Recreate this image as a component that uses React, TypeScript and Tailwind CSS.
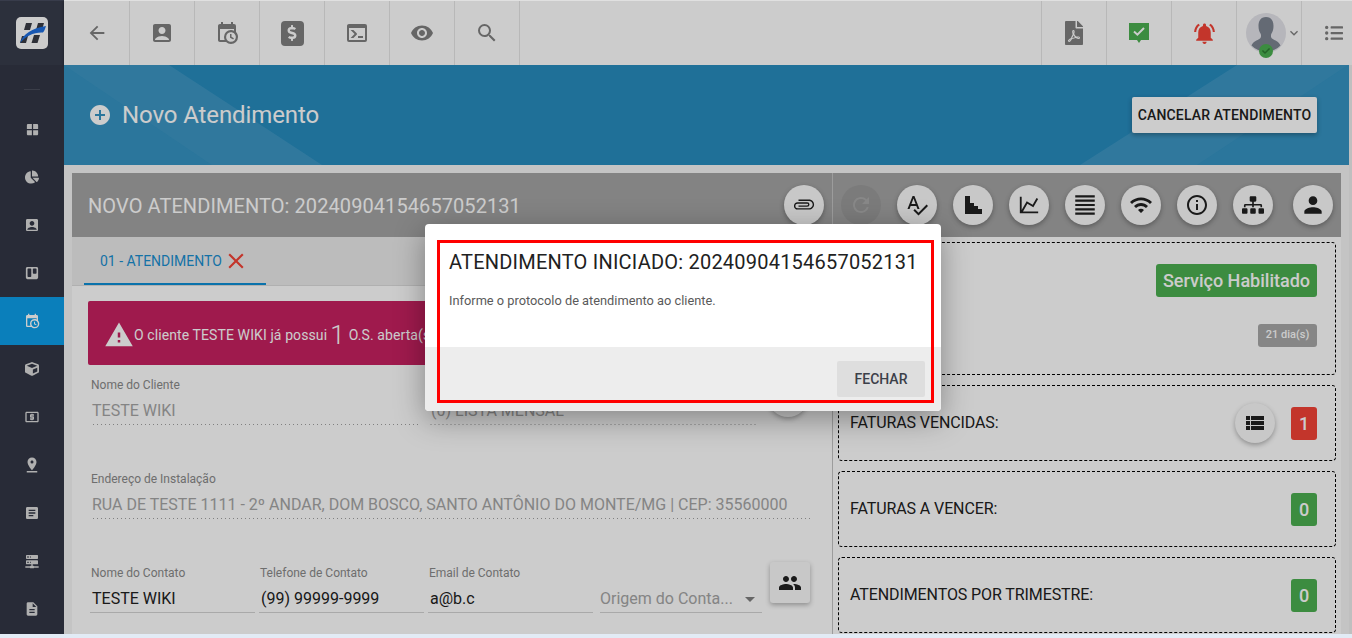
import type { ReactNode } from "react";
import {
  MdAccountBox,
  MdAddCircle,
  MdArrowBack,
  MdArticle,
  MdAttachFile,
  MdClose,
  MdDescription,
  MdExpandMore,
  MdFormatAlignJustify,
  MdInfoOutline,
  MdLocalAtm,
  MdNotificationsActive,
  MdPeople,
  MdPerson,
  MdPinDrop,
  MdRefresh,
  MdSearch,
  MdSpellcheck,
  MdViewList,
  MdVisibility,
  MdWarning,
  MdWifi,
  MdWindow,
} from "react-icons/md";
import {
  FaChartPie,
  FaCheck,
  FaCube,
  FaDollarSign,
  FaFilePdf,
  FaListUl,
  FaSitemap,
  FaTrello,
} from "react-icons/fa";

function Mdi({ d, className }: { d: string; className?: string }) {
  return (
    <svg viewBox="0 0 24 24" fill="currentColor" className={className}>
      <path d={d} />
    </svg>
  );
}

const calendarClock =
  "M15,13H16.5V15.82L18.94,17.23L18.19,18.53L15,16.69V13M19,8H5V19H9.67C9.24,18.09 9,17.07 9,16A7,7 0 0,1 16,9C17.07,9 18.09,9.24 19,9.67V8M5,21C3.89,21 3,20.1 3,19V5C3,3.89 3.89,3 5,3H6V1H8V3H16V1H18V3H19A2,2 0 0,1 21,5V11.1C22.24,12.36 23,14.09 23,16A7,7 0 0,1 16,23C14.09,23 12.36,22.24 11.1,21H5M16,11.15A4.85,4.85 0 0,0 11.15,16C11.15,18.68 13.32,20.85 16,20.85A4.85,4.85 0 0,0 20.85,16C20.85,13.32 18.68,11.15 16,11.15Z";
const consoleBox =
  "M20,19V7H4V19H20M20,3A2,2 0 0,1 22,5V19A2,2 0 0,1 20,21H4A2,2 0 0,1 2,19V5C2,3.89 2.9,3 4,3H20M13,17V15H18V17H13M9.58,13L5.57,9H8.4L11.7,12.3C12.09,12.69 12.09,13.33 11.7,13.72L8.42,17H5.59L9.58,13Z";
const serverNetwork =
  "M13,19H14A1,1 0 0,1 15,20H22V22H15A1,1 0 0,1 14,23H10A1,1 0 0,1 9,22H2V20H9A1,1 0 0,1 10,19H11V17H4A1,1 0 0,1 3,16V12A1,1 0 0,1 4,11H20A1,1 0 0,1 21,12V16A1,1 0 0,1 20,17H13V19M4,3H20A1,1 0 0,1 21,4V8A1,1 0 0,1 20,9H4A1,1 0 0,1 3,8V4A1,1 0 0,1 4,3M9,7H10V5H9V7M9,15H10V13H9V15M5,5V7H7V5H5M5,13V15H7V13H5Z";
const chartLine =
  "M16,11.78L20.24,4.45L21.97,5.45L16.74,14.5L10.23,10.75L5.46,19H22V21H2V3H4V17.54L9.5,8L16,11.78Z";
const chartSteps = "M4 3h5v7h4v3h4v3h4v5H4z";

function Logo() {
  return (
    <svg viewBox="0 0 32 32" className="h-8 w-8">
      <rect width="32" height="32" rx="5" fill="#fff" />
      <path d="M10 6h6l-2 7H8zM22 6h6l-2 7h-6zM6 19h6l-2 7H4zM18 18h6l-2.500 8h-6z" fill="#3a3d46" />
      <path d="M4 26C7 17 16 11 30 9c-1 3-1.500 5-3 6.500C18 15 10 19 4 26z" fill="#1e6fe0" />
    </svg>
  );
}

function ChatCheck() {
  return (
    <svg viewBox="0 0 24 24" className="h-[24px] w-[24px]">
      <path d="M2 2h20v17h-8l-2 3-2-3H2z" fill="#4caf50" />
      <path d="M7 10.500l3.400 3.200L17 7" fill="none" stroke="#fff" strokeWidth="2" />
    </svg>
  );
}

function Avatar() {
  return (
    <div className="relative h-10 w-10">
      <svg viewBox="0 0 40 40" className="h-10 w-10">
        <circle cx="20" cy="20" r="20" fill="#e4e4ea" />
        <path
          d="M20 4c5.500 0 7.500 4 7.500 9 0 3-.7 5.500-2 7.500-.8 1.400-.8 4 .5 5 3 2 7 3 8.500 7A20 20 0 0 1 5.500 32.500c1.500-4 5.500-5 8.500-7 1.300-1 1.300-3.600.5-5-1.300-2-2-4.500-2-7.500 0-5 2-9 7.500-9z"
          fill="#7d8592"
        />
      </svg>
      <div className="absolute left-[13px] top-[31px] flex h-[14px] w-[14px] items-center justify-center rounded-full bg-[#4caf50]">
        <FaCheck className="h-2 w-2 text-[#2e7d32]" />
      </div>
    </div>
  );
}

function Tool({ children }: { children: ReactNode }) {
  return (
    <div className="flex h-full w-[65px] shrink-0 items-center justify-center border-r border-[#e6e6e6] text-[#808080]">
      {children}
    </div>
  );
}

function Side({ children, active }: { children: ReactNode; active?: boolean }) {
  return (
    <div
      className={
        active
          ? "flex h-12 items-center justify-center bg-[#0d9fea] text-white"
          : "flex h-12 items-center justify-center text-[#dcdcdc]"
      }
    >
      {children}
    </div>
  );
}

function Round({ children, dark }: { children: ReactNode; dark?: boolean }) {
  return (
    <div
      className={
        dark
          ? "flex h-10 w-10 shrink-0 items-center justify-center rounded-full bg-[#9a9a9a] text-[#aaaaaa]"
          : "flex h-10 w-10 shrink-0 items-center justify-center rounded-full bg-[#fafafa] text-[#212121] shadow-[0_2px_5px_rgba(0,0,0,0.3)]"
      }
    >
      {children}
    </div>
  );
}

function Field({
  label,
  value,
  dim,
  className,
}: {
  label: string;
  value: string;
  dim?: boolean;
  className: string;
}) {
  return (
    <div
      className={
        dim
          ? `h-[48px] bg-[linear-gradient(to_right,#a0a0a0_1px,transparent_1px)] bg-[length:4px_1px] bg-bottom bg-repeat-x ${className}`
          : `h-[48px] border-b border-[#d4d4d4] ${className}`
      }
    >
      <div className="h-4 pl-px text-[12px] leading-4 text-[#8a8a8a]">{label}</div>
      <div
        className={
          dim
            ? "mt-[6px] h-6 truncate pl-[2px] text-[16px] leading-6 text-[#a6a6a6]"
            : "mt-[6px] h-6 truncate pl-[2px] text-[16px] leading-6 text-[#212121]"
        }
      >
        {value}
      </div>
    </div>
  );
}

function Count({ n, red }: { n: number; red?: boolean }) {
  return (
    <div
      className={
        red
          ? "flex h-[33px] w-[26px] items-center justify-center rounded-[3px] bg-[#f44336] text-[18px] font-medium text-white"
          : "flex h-[33px] w-[26px] items-center justify-center rounded-[3px] bg-[#4caf50] text-[18px] font-medium text-white"
      }
    >
      {n}
    </div>
  );
}

function InfoBox({ title, children }: { title: string; children: ReactNode }) {
  return (
    <div className="flex h-[76px] items-center rounded-[4px] border border-dashed border-black pl-[11px] pr-[18px]">
      <span className="flex-1 text-[16px] tracking-[-0.1px] text-[#212121]">{title}</span>
      {children}
    </div>
  );
}

export default function App() {
  return (
    <div className="relative flex h-[638px] w-[1352px] overflow-hidden bg-[#f6f6f6] font-['Roboto',sans-serif]">
      {/* sidebar */}
      <aside className="w-16 shrink-0 bg-[#323645]">
        <div className="flex h-[65px] items-center justify-center bg-[#383c4b] pt-px">
          <Logo />
        </div>
        <div className="mx-6 mt-6 h-px bg-[#4a4e5c]" />
        <div className="mt-[15px]">
          <Side><MdWindow className="h-[15px] w-[15px]" /></Side>
          <Side><FaChartPie className="h-[14px] w-[14px]" /></Side>
          <Side><MdAccountBox className="h-4 w-4" /></Side>
          <Side><FaTrello className="h-[14px] w-[14px]" /></Side>
          <Side active><Mdi d={calendarClock} className="h-4 w-4" /></Side>
          <Side><FaCube className="h-[14px] w-[14px]" /></Side>
          <Side><MdLocalAtm className="h-4 w-4" /></Side>
          <Side><MdPinDrop className="h-[18px] w-[18px]" /></Side>
          <Side><MdArticle className="h-4 w-4" /></Side>
          <Side><Mdi d={serverNetwork} className="h-4 w-4" /></Side>
          <Side><MdDescription className="h-4 w-4" /></Side>
        </div>
      </aside>

      <div className="flex min-w-0 flex-1 flex-col">
        {/* toolbar */}
        <header className="flex h-[65px] shrink-0 items-center border-t border-[#e0e0e0] bg-white pl-px shadow-[0_1px_3px_rgba(0,0,0,0.4)]">
          <Tool><MdArrowBack className="h-[22px] w-[22px]" /></Tool>
          <Tool><MdAccountBox className="h-[24px] w-[24px]" /></Tool>
          <Tool><Mdi d={calendarClock} className="h-[24px] w-[24px]" /></Tool>
          <Tool>
            <div className="flex h-[25px] w-[23px] items-center justify-center rounded-[4px] bg-[#808080]">
              <FaDollarSign className="h-4 w-4 text-white" />
            </div>
          </Tool>
          <Tool><Mdi d={consoleBox} className="h-[24px] w-[24px]" /></Tool>
          <Tool><MdVisibility className="h-[24px] w-[24px]" /></Tool>
          <Tool><MdSearch className="h-[24px] w-[24px]" /></Tool>
          <div className="flex-1" />
          <div className="flex h-full w-[66px] shrink-0 items-center justify-center border-x border-[#e6e6e6] text-[#808080]">
            <FaFilePdf className="h-6 w-6" />
          </div>
          <Tool><ChatCheck /></Tool>
          <Tool><MdNotificationsActive className="h-[25px] w-[25px] text-[#f44336]" /></Tool>
          <div className="flex h-full w-[65px] shrink-0 items-center border-r border-[#e6e6e6] pl-[9px] text-[#808080]">
            <Avatar />
            <MdExpandMore className="h-4 w-4 shrink-0" />
          </div>
          <div className="flex h-full w-[50px] shrink-0 items-center justify-end pr-[9px] text-[#808080]">
            <FaListUl className="h-[18px] w-[18px]" />
          </div>
        </header>

        <div className="flex min-h-0 flex-1">
          <div className="flex min-w-0 flex-1 flex-col">
            {/* banner */}
            <section className="relative flex h-[100px] shrink-0 items-center justify-between overflow-hidden bg-[#278cbf] pl-[24px] pr-[32px]">
              <svg viewBox="0 0 1285 100" className="absolute inset-0 h-full w-full">
                <polygon points="0,0 148,100 0,100" fill="#fff" fillOpacity="0.07" />
                <polygon points="0,0 105,0 258,100 148,100" fill="#fff" fillOpacity="0.1" />
                <polygon points="1173,0 1284,0 1133,100 1016,100" fill="#fff" fillOpacity="0.1" />
                <polygon points="1284,0 1285,0 1285,100 1133,100" fill="#fff" fillOpacity="0.07" />
              </svg>
              <div className="relative flex items-center gap-[10px] text-white">
                <MdAddCircle className="h-6 w-6" />
                <h1 className="text-[24px] font-normal tracking-[-0.1px]">Novo Atendimento</h1>
              </div>
              <button className="relative h-[36px] w-[185px] rounded-[2px] bg-white text-[14px] font-medium tracking-[0.15px] text-[#212121] shadow-[0_2px_5px_rgba(0,0,0,0.3)]">
                CANCELAR ATENDIMENTO
              </button>
            </section>

            {/* panels */}
            <main className="flex min-h-0 flex-1 pl-2 pr-2 pt-2">
              <div className="w-[760px] shrink-0 overflow-hidden bg-white">
                <div className="flex h-[64px] items-center justify-between bg-[#a4a4a4] pl-4 pr-2">
                  <span className="pt-px text-[20px] tracking-[0.08px] text-white">
                    NOVO ATENDIMENTO: 20240904154657052131
                  </span>
                  <Round><MdAttachFile className="h-[22px] w-[22px] -rotate-90 text-[#212121]" /></Round>
                </div>
                <div className="flex h-[49px] border-b border-[#dcdcdc] bg-[#ececec] pl-3">
                  <div className="flex h-[48px] w-[182px] items-center gap-[1px] border-b-2 border-[#0d8fd6] pl-4 pt-[2px] text-[14px] text-[#1a8fd0]">
                    01 - ATENDIMENTO
                    <MdClose className="h-[26px] w-[26px] text-[#f44336]" />
                  </div>
                </div>
                <div className="px-4 pt-[15px]">
                  <div className="flex h-[64px] items-center whitespace-nowrap rounded-[2px] bg-[#c72161] pl-[16px] pt-1 text-[14px] tracking-[0.1px] text-white">
                    <MdWarning className="h-[30px] w-[30px]" />
                    <span>O cliente TESTE WIKI já possui</span>
                    <span className="ml-[3px] mr-[4px] text-[26px] font-light leading-none">1</span>
                    <span>O.S. aberta(s) para este contrato.</span>
                  </div>
                  <div className="mt-3 flex flex-col gap-[46px] pl-[2px] pr-[4px]">
                    <div className="flex items-start gap-[9px]">
                      <Field label="Nome do Cliente" value="TESTE WIKI" dim className="w-[330px]" />
                      <Field label="Contrato" value="(0) LISTA MENSAL" dim className="w-[327px]" />
                      <div className="ml-[3px]">
                        <Round><MdViewList className="h-5 w-5" /></Round>
                      </div>
                    </div>
                    <Field
                      label="Endereço de Instalação"
                      value="RUA DE TESTE 1111 - 2º ANDAR, DOM BOSCO, SANTO ANTÔNIO DO MONTE/MG | CEP: 35560000"
                      dim
                      className="w-full"
                    />
                    <div className="flex items-start gap-[4px]">
                      <Field label="Nome do Contato" value="TESTE WIKI" className="w-[165px]" />
                      <Field label="Telefone de Contato" value="(99) 99999-9999" className="w-[165px]" />
                      <Field label="Email de Contato" value="a@b.c" className="w-[165px]" />
                      <div className="ml-[3px] mt-[21px] flex h-[27px] w-[162px] items-center justify-between border-b border-[#d4d4d4] pr-[7px] text-[16px] text-[#a6a6a6]">
                        <span>Origem do Conta...</span>
                        <span className="h-0 w-0 border-x-[5px] border-t-[5px] border-x-transparent border-t-[#808080]" />
                      </div>
                      <div className="ml-[4px] mt-[-3px] flex h-[41px] w-[40px] shrink-0 items-center justify-center rounded-[3px] bg-[#fafafa] text-[#212121] shadow-[0_2px_5px_rgba(0,0,0,0.3)]">
                        <MdPeople className="h-6 w-6" />
                      </div>
                    </div>
                  </div>
                </div>
              </div>

              <div className="min-w-0 flex-1 border-l border-[#c4c4c4] bg-white">
                <div className="flex h-[64px] items-center bg-[#a4a4a4] pl-[8px] pr-[9px]">
                  <Round dark><MdRefresh className="h-6 w-6" /></Round>
                  <div className="ml-4 flex gap-4">
                    <Round><MdSpellcheck className="h-6 w-6" /></Round>
                    <Round><Mdi d={chartSteps} className="h-6 w-6" /></Round>
                    <Round><Mdi d={chartLine} className="h-[22px] w-[22px]" /></Round>
                    <Round><MdFormatAlignJustify className="h-[26px] w-[26px]" /></Round>
                    <Round><MdWifi className="h-6 w-6" /></Round>
                    <Round><MdInfoOutline className="h-6 w-6" /></Round>
                    <Round><FaSitemap className="h-[22px] w-[22px]" /></Round>
                  </div>
                  <div className="ml-5">
                    <Round><MdPerson className="h-[26px] w-[26px]" /></Round>
                  </div>
                </div>
                <div className="flex flex-col gap-[10px] pl-[5px] pr-[5px] pt-[5px]">
                  <div className="flex h-[133px] flex-col items-end rounded-[4px] border border-dashed border-black pr-[18px] pt-[21px]">
                    <div className="flex h-[33px] w-[161px] items-center justify-center rounded-[3px] bg-[#4caf50] text-[18px] font-medium text-white">
                      Serviço Habilitado
                    </div>
                    <div className="mt-[27px] flex h-[23px] w-[59px] items-center justify-center rounded-[3px] bg-[#a8a8a8] text-[11px] font-medium text-white">
                      21 dia(s)
                    </div>
                  </div>
                  <InfoBox title="FATURAS VENCIDAS:">
                    <div className="mr-[16px]">
                      <Round><MdViewList className="h-6 w-6" /></Round>
                    </div>
                    <Count n={1} red />
                  </InfoBox>
                  <InfoBox title="FATURAS A VENCER:"><Count n={0} /></InfoBox>
                  <InfoBox title="ATENDIMENTOS POR TRIMESTRE:"><Count n={0} /></InfoBox>
                </div>
              </div>
            </main>
          </div>
          {/* scrollbar */}
          <div className="w-[3px] shrink-0 bg-[#efefef]" />
        </div>
      </div>

      {/* dimmed backdrop + dialog */}
      <div className="absolute inset-x-0 bottom-[4px] top-px bg-black/20" />
      <div className="absolute bottom-0 left-0 right-0 h-[4px] bg-[#e2ebf5]" />
      <div className="absolute left-[425px] top-[224px] h-[187px] w-[516px] overflow-hidden rounded-[4px] bg-white shadow-[0_8px_30px_rgba(0,0,0,0.35)]">
        <div className="h-[123px] pl-[24px] pt-[26px]">
          <h2 className="text-[20px] font-normal leading-6 tracking-[0.22px] text-[#212121]">
            ATENDIMENTO INICIADO: 20240904154657052131
          </h2>
          <p className="mt-[19px] text-[12.8px] leading-4 text-[#5a5a5a]">
            Informe o protocolo de atendimento ao cliente.
          </p>
        </div>
        <div className="flex h-[64px] items-start justify-end bg-[#ededed] pr-[16px] pt-[14px]">
          <button className="h-[36px] w-[88px] rounded-[2px] bg-[#dedede] text-[14px] font-medium text-[#3c4049]">
            FECHAR
          </button>
        </div>
        {/* annotation from the original screenshot */}
        <div className="absolute left-[12px] top-[16px] h-[163px] w-[497px] border-[3px] border-[#ff0000]" />
      </div>
    </div>
  );
}
